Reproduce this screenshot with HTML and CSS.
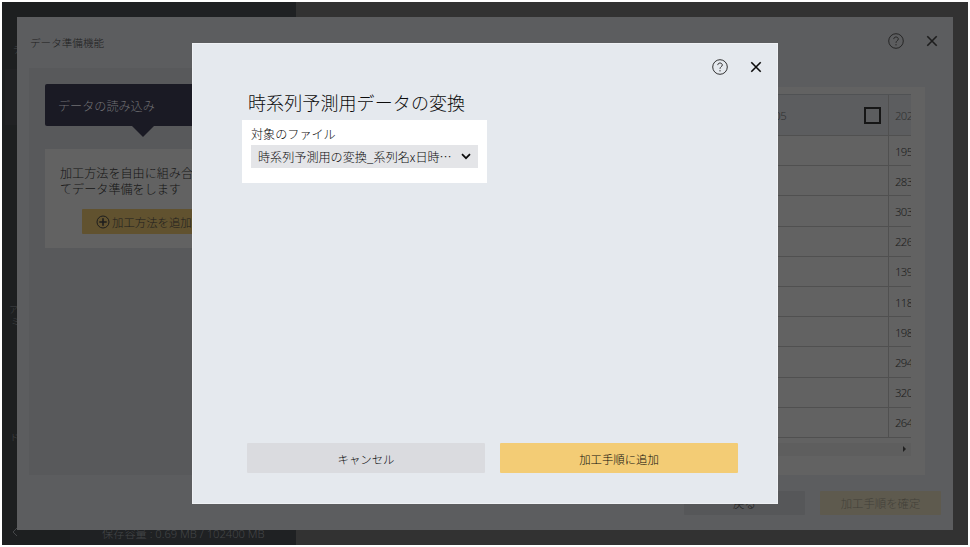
FILE: index.html
```
<!DOCTYPE html>
<html lang="ja">
<head>
<meta charset="utf-8">
<title>データ準備機能</title>
<link rel="stylesheet" href="styles.css">
</head>
<body>
<div class="screen">
  <div class="app">
    <aside class="sidebar">
      <nav class="rail">
        <span class="rail-label first">デ</span>
        <span class="rail-active"></span>
        <span class="rail-label analysis">ア<br>&nbsp;ミ</span>
        <span class="rail-label docs">ド</span>
        <svg class="collapse" viewBox="0 0 8 10"><path d="M6 1 2 5l4 4"/></svg>
      </nav>
      <div class="storage">保存容量 : 0.69 MB / 102400 MB</div>
    </aside>
    <main class="canvas"></main>
  </div>

  <section class="prep">
    <header class="prep-head">
      <h1>データ準備機能</h1>
      <div class="tools">
        <svg class="help" viewBox="0 0 16 16"><circle cx="8" cy="8" r="7.3"/><path d="M5.8 6.1C5.8 4.7 6.7 4 8 4s2.3.8 2.3 2c0 1.7-2.3 1.7-2.3 3.8"/><path d="M8 11.1v1.3"/></svg>
        <svg class="close" viewBox="0 0 12 12"><path d="m1.3 1.3 9.4 9.4m0-9.4-9.4 9.4"/></svg>
      </div>
    </header>
    <div class="prep-body">
      <div class="steps">
        <div class="step">データの読み込み</div>
        <div class="step-card">
          <p>加工方法を自由に組み合わせ<br>てデータ準備をします</p>
          <button class="add"><svg viewBox="0 0 14 14"><circle cx="7" cy="7" r="6"/><path class="plus" d="M7 3.3v7.4M3.3 7h7.4"/></svg>加工方法を追加</button>
        </div>
      </div>
      <div class="preview">
        <div class="table">
          <div class="row head"><div class="cell wide"><span>202005</span><i class="check"></i></div><div class="cell">202</div></div>
          <div class="row"><div class="cell wide"></div><div class="cell">195</div></div>
          <div class="row"><div class="cell wide"></div><div class="cell">283</div></div>
          <div class="row"><div class="cell wide"></div><div class="cell">303</div></div>
          <div class="row"><div class="cell wide"></div><div class="cell">226</div></div>
          <div class="row"><div class="cell wide"></div><div class="cell">139</div></div>
          <div class="row"><div class="cell wide"></div><div class="cell">118</div></div>
          <div class="row"><div class="cell wide"></div><div class="cell">198</div></div>
          <div class="row"><div class="cell wide"></div><div class="cell">294</div></div>
          <div class="row"><div class="cell wide"></div><div class="cell">320</div></div>
          <div class="row"><div class="cell wide"></div><div class="cell">264</div></div>
        </div>
        <div class="scrollbar"><i></i></div>
      </div>
    </div>
    <footer class="prep-foot">
      <button class="back">戻る</button>
      <button class="confirm">加工手順を確定</button>
    </footer>
  </section>

  <section class="modal">
    <div class="tools">
      <svg class="help" viewBox="0 0 16 16"><circle cx="8" cy="8" r="7.3"/><path d="M5.8 6.1C5.8 4.7 6.7 4 8 4s2.3.8 2.3 2c0 1.7-2.3 1.7-2.3 3.8"/><path d="M8 11.1v1.3"/></svg>
      <svg class="close" viewBox="0 0 12 12"><path d="m1.3 1.3 9.4 9.4m0-9.4-9.4 9.4"/></svg>
    </div>
    <h2>時系列予測用データの変換</h2>
    <div class="field">
      <label>対象のファイル</label>
      <div class="select"><span>時系列予測用の変換_系列名x日時…</span><svg viewBox="0 0 10 7"><path d="m1 1.2 4 4 4-4"/></svg></div>
    </div>
    <footer class="modal-foot">
      <button class="cancel">キャンセル</button>
      <button class="submit">加工手順に追加</button>
    </footer>
  </section>
</div>
</body>
</html>
```
FILE: styles.css
```
* { box-sizing: border-box; }
body {
  margin: 0;
  padding: 2px;
  background: #fff;
  font-family: "Noto Sans CJK JP", "Noto Sans", sans-serif;
  font-weight: 300;
  overflow: hidden;
}
h1, h2, p { margin: 0; font-weight: 300; }
button {
  border: 0;
  padding: 0;
  font: inherit;
  font-size: 11.4px;
  color: inherit;
  border-radius: 1px;
}
svg { fill: none; stroke: currentColor; display: block; flex: none; }
.screen { position: relative; width: 966px; height: 543px; overflow: hidden; }

/* Application behind the dialogs */
.app { display: flex; height: 100%; }
.sidebar { display: flex; width: 294px; background: #1f2123; color: #444648; }
.rail {
  width: 68px;
  background: #1d1f20;
  padding: 42px 0 0 3px;
  display: flex;
  flex-direction: column;
  font-size: 9px;
  line-height: 12px;
}
.rail-label.first { padding-left: 8px; height: 25px; }
.rail-active { height: 56px; background: #202123; }
.rail-label.analysis { margin-top: 179px; padding-left: 4px; height: 128px; }
.rail-label.docs { padding-left: 5px; height: 95px; }
.collapse { width: 8px; height: 10px; margin-left: 6px; }
.storage {
  align-self: flex-end;
  padding-left: 32px;
  height: 20px;
  font-family: "Noto Sans", "Noto Sans CJK JP", sans-serif;
  font-size: 11.2px;
  line-height: 17px;
  white-space: nowrap;
}
.canvas { flex: 1; background: #323232; }

.tools { display: flex; align-items: center; gap: 22px; }
.help { width: 16px; height: 16px; stroke-width: 1; color: #333; }
.prep .help { color: #262626; }
.close { width: 12px; height: 12px; stroke-width: 1.6; }

/* Data preparation dialog */
.prep {
  position: absolute;
  left: 15px;
  top: 15px;
  width: 936px;
  height: 513px;
  background: #5c5d5f;
  color: #1d1d1d;
  display: flex;
  flex-direction: column;
}
.prep-head {
  height: 51px;
  padding: 0 15px 0 12px;
  display: flex;
  align-items: center;
  justify-content: space-between;
}
.prep-head h1 { font-size: 10.6px; color: #202020; padding-left: 1px; }
.prep-head .tools { padding-bottom: 3px; }
.prep-body { height: 407px; display: flex; padding-left: 12px; padding-right: 28px; }
.steps { width: 227px; background: #58595b; padding: 16px; }
.step {
  position: relative;
  height: 42px;
  padding-left: 13px;
  line-height: 43px;
  font-size: 12.1px;
  color: #717174;
  background: #1a1a24;
  border-radius: 2px;
}
.step::after {
  content: "";
  position: absolute;
  top: 100%;
  left: 50%;
  margin-left: -11px;
  border: 11px solid transparent;
  border-top-color: #1a1a24;
  border-bottom: 0;
}
.step-card {
  margin-top: 23px;
  height: 99px;
  background: #626262;
  padding: 16px 15px 0;
}
.step-card p { font-size: 12.1px; line-height: 16px; white-space: nowrap; color: #141414; }
.add {
  margin: 12px 0 0 22px;
  width: 121px;
  height: 25px;
  background: #61522f;
  display: flex;
  align-items: center;
  padding-left: 14px;
  gap: 2px;
  white-space: nowrap;
}
.add svg { width: 14px; height: 14px; }
.add .plus { stroke-width: 1.6; }
.preview {
  flex: 1;
  margin: 19px 0 0 14px;
  padding: 7px 14px 0;
  background: #626262;
}
.table { overflow: hidden; font-size: 11.3px; color: #1c1c1c; font-family: "Noto Sans", sans-serif; letter-spacing: -.6px; }
.row { display: flex; height: 30.2px; border-bottom: 1px solid #505050; }
.row.head { height: 42px; background: #5c5d5f; border-top: 1px solid #505254; color: #303132; }
.cell { width: 22px; padding: 1px 0 0 6px; display: flex; align-items: center; overflow: hidden; white-space: nowrap; }
.cell.wide { flex: 1; border-right: 1px solid #505050; justify-content: flex-end; padding: 0 7px 0 0; }
.head .cell.wide { gap: 78px; }
.check { width: 17px; height: 17px; border: 2px solid #161616; }
.scrollbar {
  margin-top: 5px;
  height: 13px;
  background: #5e5e5e;
  display: flex;
  align-items: center;
  justify-content: flex-end;
  padding-right: 5px;
}
.scrollbar i { border: 3px solid transparent; border-left: 3px solid #202020; border-right: 0; }
.prep-foot { display: flex; gap: 15px; justify-content: flex-end; padding: 16px 12px 0 0; }
.prep-foot button { width: 121px; height: 24px; line-height: 24px; }
.back { background: #565759; }
.confirm { background: #5e5a4e; color: #434139; }

/* Conversion dialog */
.modal {
  position: absolute;
  left: 190px;
  top: 41px;
  width: 586px;
  height: 461px;
  background: #e5e9ee;
  border: 1px solid #eff1f4;
  color: #0c0c0c;
  padding: 15px 38px 0 49px;
  display: flex;
  flex-direction: column;
}
.modal .tools { justify-content: flex-end; margin-right: -23px; height: 16px; }
.modal h2 { margin: 15px 0 0 6px; height: 30px; font-size: 18px; line-height: 25px; letter-spacing: .1px; }
.field { width: 245px; height: 63px; background: #fff; padding: 5px 9px; }
.field label { display: block; height: 20px; line-height: 18px; font-size: 12.1px; }
.select {
  height: 23px;
  background: #e4e5e8;
  display: flex;
  align-items: center;
  justify-content: space-between;
  padding: 0 7px;
  font-size: 12.1px;
  white-space: nowrap;
}
.select svg { width: 10px; height: 7px; stroke-width: 1.7; }
.modal-foot { display: flex; gap: 15px; margin: auto 0 30px 5px; }
.modal-foot button { width: 238px; height: 30px; line-height: 32px; flex: none; }
.cancel { background: #dadbdf; }
.submit { background: #f3cc75; }
```
